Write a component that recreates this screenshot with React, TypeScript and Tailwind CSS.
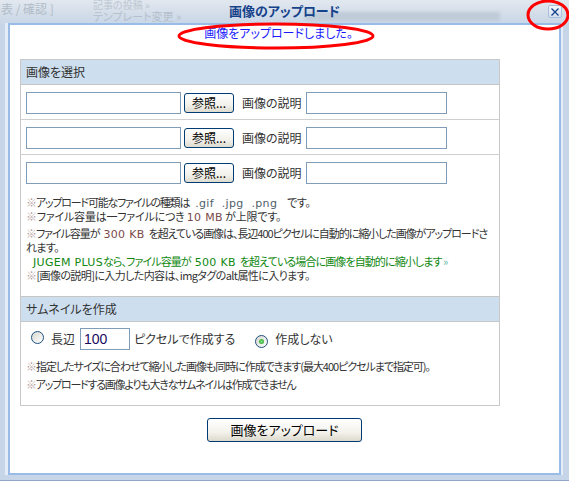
import React from "react";

function Radio({ checked }: { checked?: boolean }) {
  return (
    <span className="inline-flex w-[13px] h-[13px] shrink-0 items-center justify-center rounded-full border border-[#1c5180] bg-[linear-gradient(135deg,#d8d7d0,#ffffff)]">
      {checked && <span className="w-[5px] h-[5px] rounded-full bg-[radial-gradient(circle,#7ee07e,#1e9a1e)]" />}
    </span>
  );
}

function Field({ w }: { w: string }) {
  return <div className={`${w} h-[22px] shrink-0 border border-[#7f9db9] bg-white`} />;
}

function BrowseButton() {
  return (
    <div className="w-[50px] h-[20px] shrink-0 flex items-center justify-center rounded-[3px] border border-[#003c74] bg-[linear-gradient(#ffffff,#f2f1eb_60%,#dedbcf)] text-[12px] leading-none text-black">
      参照...
    </div>
  );
}

function FileRow({ last }: { last?: boolean }) {
  return (
    <div className={`h-[35px] flex items-center pl-[5px] pt-[1px] ${last ? "" : "border-b border-[#cfcfcf]"}`}>
      <Field w="w-[155px]" />
      <div className="ml-[3px]">
        <BrowseButton />
      </div>
      <span className="ml-[8px] text-[12px] text-[#333]">画像の説明</span>
      <div className="ml-[4px]">
        <Field w="w-[141px]" />
      </div>
    </div>
  );
}

const mark = <span className="leading-none text-[#b8a3a3]">※</span>;
const verd = "font-['DejaVu_Sans',sans-serif] text-[11px] leading-none tracking-[0.3px]";

export default function App() {
  return (
    <div className="relative w-[569px] h-[481px] overflow-hidden bg-[#c6d5e7] flex flex-col font-['Noto_Sans_CJK_JP',sans-serif] [font-feature-settings:'palt']">
      {/* title bar */}
      <div className="relative h-[23px] shrink-0 bg-[linear-gradient(#e2e8f0,#d3dde9_60%,#c9d7e8)] flex items-center justify-center">
        <span className="absolute left-[1px] top-[2px] text-[12px] leading-[13px] text-[#b1bcc8]">表 / 確認 ]</span>
        <span className="absolute left-[93px] top-[0px] text-[10px] leading-[10px] text-[#bcc6d1]">記事の投稿 »</span>
        <span className="absolute left-[93px] top-[10px] text-[11px] leading-[12px] text-[#b4bfcb]">テンプレート変更 »</span>
        <div className="absolute left-[305px] top-[12px] w-[195px] h-[9px] rounded-[2px] bg-[#c0cbd8] blur-[1.5px]" />
        <span className="relative text-[13px] font-bold leading-none text-[#15428b] -mt-[3px]">画像のアップロード</span>
        <div className="absolute left-[548px] top-[5px] w-[14px] h-[13px] rounded-[2px] border border-[#a9bfdb] bg-[linear-gradient(#f4f7fc,#d3e0f0)] flex items-center justify-center">
          <svg width="8" height="8" viewBox="0 0 8 8">
            <path d="M0.5 0.5L7.5 7.5M7.5 0.5L0.5 7.5" stroke="#15428b" strokeWidth="1.3" />
          </svg>
        </div>
      </div>

      {/* frame */}
      <div className="flex-1 flex pl-[5px] pr-[6px]">
        <div className="flex-1 flex bg-[#e4ecf7] pl-[3px] pr-[2px]">
          <div className="flex-1 border-2 border-[#99bbe8] bg-white flex flex-col items-center">
            <div className="h-[34px] pt-[1px] text-[12px] leading-[14px] text-[#1a1aff] -ml-[12px]">
              画像をアップロードしました。
            </div>

            <div className="self-start ml-[10px] w-[480px] border border-[#c9c9c9] text-[#333]">
              <div className="h-[25px] bg-[#cddeee] border-b border-[#c6c6c6] flex items-center pl-[5px] text-[12px]">
                画像を選択
              </div>
              <FileRow />
              <FileRow />
              <FileRow last />
              <div className="pl-[5px] pt-[5px] pb-[14px] text-[11px] leading-[14px] text-[#333] whitespace-nowrap">
                <div className="h-[14px] tracking-[-1.2px]">
                  {mark}アップロード可能なファイルの種類は
                  <span className={`${verd} text-[#50606a] ml-[6px]`}>.gif</span>
                  <span className={`${verd} text-[#50606a] ml-[8px]`}>.jpg</span>
                  <span className={`${verd} text-[#50606a] ml-[8px]`}>.png</span>
                  <span className="ml-[10px] tracking-[-0.4px]">です。</span>
                </div>
                <div className="h-[14px] tracking-[-0.2px]">
                  {mark}ファイル容量は一ファイルにつき <span className={`${verd} text-[#7a4a4a]`}>10 MB</span> が上限です。
                </div>
                <div className="mt-[3px]">
                  <div className="h-[14px] tracking-[-1.05px]">
                    {mark}ファイル容量が<span className={`${verd} text-[#7a4a4a] ml-[4px] mr-[4px]`}>300 KB</span>を超えている画像は、長辺400ピクセルに自動的に縮小した画像がアップロードさ
                  </div>
                  <div className="h-[14px] tracking-[-0.6px]">れます。</div>
                  <div className="h-[14px] pl-[7px] tracking-[-0.9px] text-[#118811]">
                    <span className={verd}>JUGEM PLUS</span>なら、ファイル容量が<span className={`${verd} ml-[4px] mr-[4px]`}>500 KB</span>を超えている場合に画像を自動的に縮小します <span className="leading-none text-[#5fb8a8]">»</span>
                  </div>
                </div>
                <div className="h-[14px] tracking-[-0.6px]">
                  {mark}[画像の説明]に入力した内容は、imgタグのalt属性に入ります。
                </div>
              </div>

              <div className="h-[26px] bg-[#cddeee] border-y border-[#c6c6c6] flex items-center pl-[5px] text-[12px]">
                サムネイルを作成
              </div>
              <div className="pl-[5px] pt-[6px] pb-[14px]">
                <div className="h-[22px] flex items-center text-[12px] text-[#333]">
                  <span className="ml-[5px]"><Radio /></span>
                  <span className="ml-[7px]">長辺</span>
                  <div className="ml-[5px] w-[50px] h-[22px] border border-[#7f9db9] flex items-center pl-[3px] font-['Liberation_Sans',sans-serif] text-[14px] text-[#1a0a60]">
                    100
                  </div>
                  <span className="ml-[4px]">ピクセルで作成する</span>
                  <span className="ml-[20px]"><Radio checked /></span>
                  <span className="ml-[7px]">作成しない</span>
                </div>
                <div className="mt-[9px] h-[14px] text-[11px] leading-[14px] tracking-[-1.05px] whitespace-nowrap">
                  {mark}指定したサイズに合わせて縮小した画像も同時に作成できます(最大400ピクセルまで指定可)。
                </div>
                <div className="mt-[4px] h-[14px] text-[11px] leading-[14px] tracking-[-1.25px] whitespace-nowrap">
                  {mark}アップロードする画像よりも大きなサムネイルは作成できません
                </div>
              </div>
            </div>

            <div className="mt-[12px] w-[155px] h-[24px] rounded-[3px] border border-[#003c74] bg-[linear-gradient(#ffffff,#f3f2ec_60%,#dcd9cc)] flex items-center justify-center text-[13px] text-black">
              画像をアップロード
            </div>
          </div>
        </div>
      </div>
      <div className="h-[6px] shrink-0 border-b border-[#8ea7c6]" />

      {/* red annotation ellipses */}
      <svg className="absolute left-0 top-0 pointer-events-none" width="569" height="481">
        <ellipse cx="276" cy="36" rx="97" ry="12" fill="none" stroke="#ff0000" strokeWidth="3" />
        <ellipse cx="548" cy="15" rx="20" ry="14" fill="none" stroke="#ff0000" strokeWidth="3" />
      </svg>
    </div>
  );
}
